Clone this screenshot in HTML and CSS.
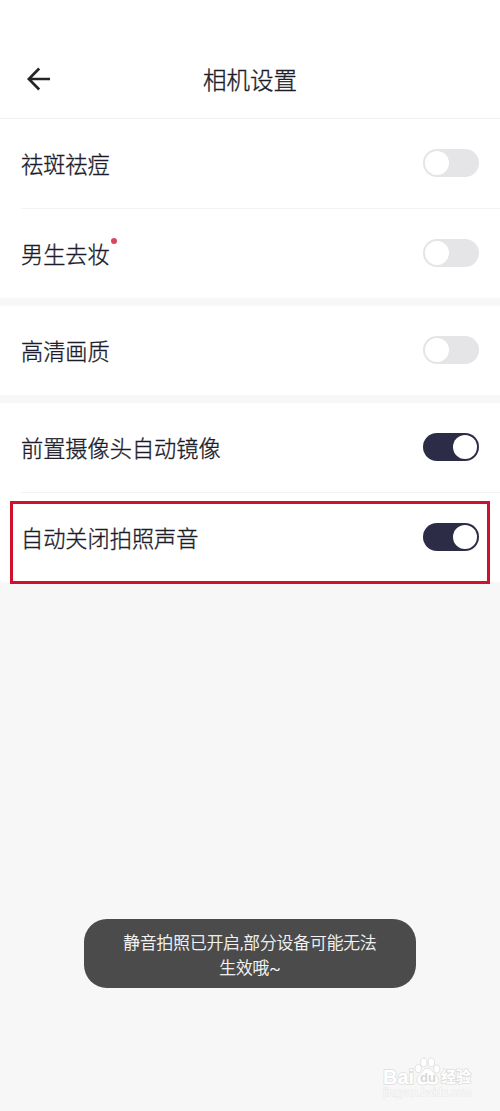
FILE: index.html
```html
<!DOCTYPE html>
<html lang="zh-CN">
<head>
<meta charset="utf-8">
<title>相机设置</title>
<link rel="stylesheet" href="styles.css">
</head>
<body>
<main class="screen">
  <header class="header">
    <svg class="back" viewBox="0 0 24 24"><path d="M23 12H2M12.2 1.5L1.8 12L12.2 22.5"/></svg>
    <h1 class="title">相机设置</h1>
  </header>
  <section class="group">
    <div class="row"><span class="label">祛斑祛痘</span><span class="switch"></span></div>
    <div class="row"><span class="label">男生去妆<i class="dot"></i></span><span class="switch"></span></div>
  </section>
  <section class="group">
    <div class="row"><span class="label">高清画质</span><span class="switch"></span></div>
  </section>
  <section class="group">
    <div class="row"><span class="label">前置摄像头自动镜像</span><span class="switch on"></span></div>
    <div class="row marked"><span class="label">自动关闭拍照声音</span><span class="switch on"></span></div>
  </section>
  <div class="toast">静音拍照已开启,部分设备可能无法<br>生效哦~</div>
  <div class="watermark">
    <div class="brand">
      <span class="latin">Bai</span>
      <span class="paw">
        <svg viewBox="0 0 28 30"><ellipse cx="4.4" cy="12" rx="3.2" ry="4.2"/><ellipse cx="10.2" cy="5.6" rx="3.3" ry="4.6"/><ellipse cx="18" cy="5.6" rx="3.3" ry="4.6"/><ellipse cx="23.6" cy="12.4" rx="3.2" ry="4.2"/><path d="M14 11.5C10 11.5 9.5 15.5 6 18.2C.5 23 3 29 8 29C11 29 12 28 14 28S17 29 20 29C26 29 27.5 23 22.5 18.5C19 15.5 18 11.5 14 11.5Z"/></svg>
        <span class="du">du</span>
      </span>
      <span class="cn">经验</span>
    </div>
    <div class="site">jingyan.baidu.com</div>
  </div>
</main>
</body>
</html>
```
FILE: styles.css
```css
* { box-sizing: border-box; }
body {
  margin: 0;
  background: #f7f7f7;
  color: #1c1c2a;
  font-family: "Noto Sans CJK SC", sans-serif;
  font-weight: 300;
}
.screen {
  position: relative;
  height: 1111px;
  overflow: hidden;
}
.header {
  display: grid;
  grid-template-columns: 60px 1fr 60px;
  align-items: center;
  height: 119px;
  padding-top: 40px;
  background: #fff;
  border-bottom: 1px solid #f0f0f0;
}
.back {
  width: 24px;
  height: 24px;
  margin-left: 27px;
  fill: none;
  stroke: #252525;
  stroke-width: 2.7;
}
.title {
  margin: 0;
  text-align: center;
  font-size: 23.5px;
  font-weight: 300;
  line-height: 34px;
  -webkit-text-stroke: .35px #1c1c2a;
}
.group {
  margin-bottom: 8px;
  padding-left: 21px;
  background: #fff;
}
.row {
  display: flex;
  align-items: center;
  justify-content: space-between;
  height: 89px;
  padding-right: 21px;
}
.row + .row {
  height: 90px;
  border-top: 1px solid #f3f3f3;
}
.label {
  position: relative;
  margin-top: -1px;
  font-size: 22.2px;
  line-height: 32px;
  -webkit-text-stroke: .35px #1c1c2a;
}
.dot {
  position: absolute;
  top: 1px;
  right: -7px;
  width: 6px;
  height: 6px;
  border-radius: 50%;
  background: #dc4560;
}
.switch {
  display: flex;
  width: 56px;
  height: 28px;
  margin-top: -.5px;
  padding: 2px;
  border-radius: 14px;
  background: #e5e5e7;
}
.switch::before {
  content: "";
  width: 24px;
  height: 24px;
  border-radius: 50%;
  background: #fff;
}
.switch.on {
  justify-content: flex-end;
  background: #2c2c47;
}
.marked { position: relative; }
.marked::after {
  content: "";
  position: absolute;
  top: 8px;
  right: 10px;
  bottom: -2px;
  left: -11px;
  border: 3px solid #d0102d;
}
.toast {
  position: absolute;
  top: 919px;
  left: 84px;
  width: 332px;
  height: 69px;
  padding-top: 12px;
  border-radius: 23px;
  background: #4b4b4b;
  color: #fff;
  font-family: Roboto, "Noto Sans CJK SC", sans-serif;
  font-size: 16.7px;
  line-height: 25px;
  text-align: center;
  -webkit-text-stroke: .25px #fff;
}
.watermark {
  position: absolute;
  top: 1056px;
  left: 383px;
  width: 92px;
  color: #fff;
  font-family: "Liberation Sans", "Noto Sans CJK SC", sans-serif;
}
.brand {
  display: flex;
  align-items: flex-end;
  height: 30px;
}
.latin, .cn {
  font-weight: 700;
  -webkit-text-stroke: 1.6px #dedede;
  paint-order: stroke;
}
.latin {
  width: 31px;
  font-size: 20px;
  line-height: 18px;
}
.paw {
  position: relative;
  width: 27px;
  height: 29px;
}
.paw svg {
  display: block;
  width: 27px;
  height: 29px;
  fill: #fff;
  stroke: #dedede;
  stroke-width: .9;
}
.du {
  position: absolute;
  top: 13px;
  left: 6px;
  color: #d8d8d8;
  font-size: 13px;
  font-weight: 700;
  line-height: 15px;
}
.cn {
  font-size: 15px;
  line-height: 18px;
  white-space: nowrap;
}
.site {
  font-size: 11px;
  line-height: 13px;
  color: #fbfbfb;
  -webkit-text-stroke: .8px #e6e6e6;
  paint-order: stroke;
}
```
